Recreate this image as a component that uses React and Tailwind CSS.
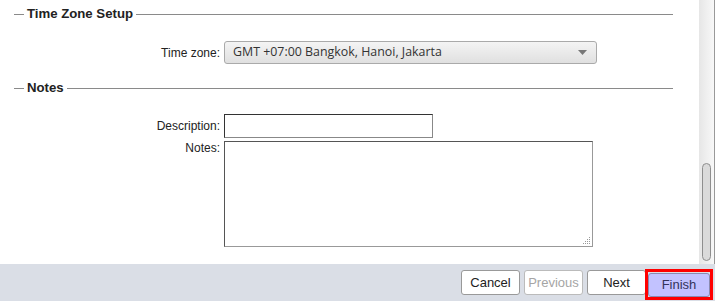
import React from 'react';

function Legend({ title }) {
  return (
    <div className="flex items-center h-[16px]">
      <div className="w-[10px] ml-[14px] h-px bg-[#8a8a8a]" />
      <span className="px-[3px] text-[13.2px] font-bold text-[#222] leading-none">{title}</span>
      <div className="flex-1 h-px bg-[#8a8a8a] mr-[26px]" />
    </div>
  );
}

function Button({ children, disabled }) {
  return (
    <button
      className={`h-[25px] w-[59px] rounded-[3px] border bg-white text-[13px] ${
        disabled ? 'border-[#bbb] text-[#a5a5a5]' : 'border-[#999] text-[#222]'
      }`}
    >
      {children}
    </button>
  );
}

export default function App() {
  return (
    <div className="w-[715px] h-[301px] flex flex-col bg-white font-['Liberation_Sans',Arial,sans-serif] overflow-hidden">
      <div className="flex h-[264px]">
        <div className="flex-1 pt-[6px]">
          <Legend title="Time Zone Setup" />
          <div className="flex items-center mt-[19px]">
            <span className="w-[220px] text-right text-[12px] text-[#222]">Time zone:</span>
            <div className="ml-[4px] w-[373px] h-[23px] flex items-center justify-between rounded-[3px] border border-[#aaa] bg-gradient-to-b from-[#f4f4f4] to-[#e0e0e0] pl-[8px] pr-[9px]">
              <span className="text-[12.4px] text-[#333] font-['Open_Sans',sans-serif]">GMT +07:00 Bangkok, Hanoi, Jakarta</span>
              <svg width="9" height="5" viewBox="0 0 9 5">
                <path d="M0 0h9L4.5 5z" fill="#777" />
              </svg>
            </div>
          </div>
          <div className="mt-[16px]">
            <Legend title="Notes" />
          </div>
          <div className="flex items-center mt-[18px]">
            <span className="w-[220px] text-right text-[12px] text-[#222]">Description:</span>
            <input className="ml-[4px] w-[209px] h-[24px] border border-[#888] border-t-[#333] border-l-[#333] outline-none" />
          </div>
          <div className="flex items-start mt-[3px]">
            <span className="w-[220px] text-right text-[12px] text-[#222] leading-[14px]">Notes:</span>
            <div className="relative ml-[4px] w-[369px] h-[106px] border border-[#555] border-r-[#999] border-b-[#999]">
              <svg className="absolute right-[1px] bottom-[1px]" width="9" height="9" viewBox="0 0 9 9">
                <g fill="#999">
                  <rect x="7" y="1" width="1" height="1" />
                  <rect x="5" y="3" width="1" height="1" />
                  <rect x="7" y="3" width="1" height="1" />
                  <rect x="3" y="5" width="1" height="1" />
                  <rect x="5" y="5" width="1" height="1" />
                  <rect x="7" y="5" width="1" height="1" />
                  <rect x="1" y="7" width="1" height="1" />
                  <rect x="3" y="7" width="1" height="1" />
                  <rect x="5" y="7" width="1" height="1" />
                  <rect x="7" y="7" width="1" height="1" />
                </g>
              </svg>
            </div>
          </div>
        </div>
        <div className="w-[16px] flex border-r border-[#999] bg-gradient-to-r from-[#e6e6e6] to-[#f8f8f8] pl-[3px] pr-[3px]">
          <div className="mt-[163px] mb-[3px] w-[9px] flex-1 rounded-[5px] border border-[#8e8e8e] bg-[#dadada]" />
        </div>
      </div>
      <div className="flex-1 bg-[#dadee6] flex items-start justify-end pt-[6px] pr-[2px]">
        <div className="flex gap-[4px]">
          <Button>Cancel</Button>
          <Button disabled>Previous</Button>
          <Button>Next</Button>
        </div>
        <div className="ml-[-1px] mt-[-1px] border-[3px] border-[#f00]">
          <button className="h-[24px] w-[62px] rounded-[3px] border border-[#8a8ab0] bg-[#c2c2ff] text-[13px] text-[#33335a]">
            Finish
          </button>
        </div>
      </div>
    </div>
  );
}
